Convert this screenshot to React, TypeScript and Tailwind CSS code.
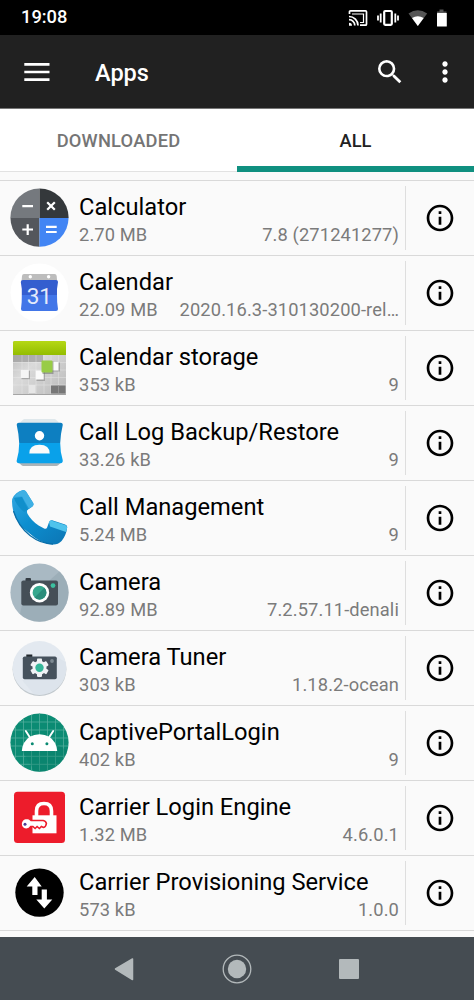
import React, { useState } from 'react';
import { MdInfoOutline, MdSearch, MdMoreVert } from 'react-icons/md';

type Tab = 'downloaded' | 'all';

interface AppInfo {
  name: string;
  size: string;
  version: string;
  icon: React.ReactNode;
}

function AppIcon({ children }: { children: React.ReactNode }) {
  return (
    <svg viewBox="0 0 60 60" className="w-[60px] h-[60px] shrink-0">
      {children}
    </svg>
  );
}

const CalculatorIcon = () => (
  <AppIcon>
    <clipPath id="calc-clip">
      <circle cx="29.5" cy="29.6" r="29.1" />
    </clipPath>
    <g clipPath="url(#calc-clip)">
      <rect width="29.5" height="30" fill="#75797e" />
      <rect x="29.5" width="30" height="30" fill="#34383b" />
      <rect y="30" width="29.5" height="30" fill="#54575c" />
      <rect x="29.5" y="30" width="30" height="30" fill="#4285f4" />
    </g>
    <g stroke="#fff" strokeWidth="2.2" fill="none">
      <path d="M12.3 18.2h10.7M12.3 41.5h10.7M17.7 36.2v10.7M36 38.8h10.7M36 44h10.7" />
      <path d="M37.2 14.2l7.6 7.6M44.8 14.2l-7.6 7.6" />
    </g>
  </AppIcon>
);

const CalendarIcon = () => (
  <AppIcon>
    <circle cx="29.5" cy="29.6" r="29" fill="#fff" />
    <path d="M14 11h30.5q2 0 2.200 2l.4 5h-35.500l.4-5q.2-2 2-2z" fill="#bdbdbd" />
    <circle cx="20.3" cy="13.8" r="1.7" fill="#fff" />
    <circle cx="38.6" cy="13.8" r="1.7" fill="#fff" />
    <path d="M13 17h33q2 0 2 2-1.5 7.5-1 13H11.8q.5-5.5-1-13 0-2 2.2-2z" fill="#345ecf" />
    <path d="M11.8 32H47q-.2 6 1 14 0 2-2 2H13q-2 0-2-2 1-8 .8-14z" fill="#4276e8" />
    <text x="29.3" y="40.500" fontSize="22.500" fontFamily="Roboto, sans-serif" textAnchor="middle" fill="#e4ebfb">31</text>
  </AppIcon>
);

const CalendarStorageIcon = () => (
  <AppIcon>
    <defs>
      <linearGradient id="cs-top" x1="0" y1="0" x2="0" y2="1">
        <stop offset="0" stopColor="#b5d815" />
        <stop offset="1" stopColor="#93bd00" />
      </linearGradient>
      <linearGradient id="cs-body" x1="0" y1="0" x2="1" y2="1">
        <stop offset="0" stopColor="#b4b4b4" />
        <stop offset=".4" stopColor="#dadada" />
        <stop offset="1" stopColor="#bababa" />
      </linearGradient>
    </defs>
    <rect x="3" y="3" width="53" height="54" rx="1.5" fill="url(#cs-body)" />
    <path d="M3 17V4.5Q3 3 4.5 3h50Q56 3 56 4.5V17z" fill="url(#cs-top)" />
    <rect x="3" y="17" width="30" height="7" fill="#9c9c9c" opacity=".7" />
    <path d="M12 17v39M18.5 17v39M26 17v39M34 17v39M41 17v39M48.5 17v39M3 24.5h53M3 32h53M3 39.5h53M3 47h53" stroke="#f1f1f1" strokeWidth=".5" opacity=".7" />
    <rect x="11.5" y="32.7" width="8.5" height="8.5" fill="#777" opacity=".5" />
    <rect x="10.8" y="32" width="8" height="8" fill="#f5f5f5" />
    <rect x="26.5" y="33.5" width="8.5" height="9.5" fill="#777" opacity=".5" />
    <rect x="25.7" y="32.5" width="8" height="9" fill="#fafafa" />
    <rect x="42" y="24.5" width="8" height="9" fill="#777" opacity=".5" />
    <rect x="41" y="24" width="7.5" height="8.5" fill="#fafafa" />
    <rect x="32.5" y="23.5" width="11" height="12.5" fill="#666" opacity=".5" />
    <rect x="31.5" y="22.5" width="11" height="12" rx="1" fill="#98cc46" />
    <rect x="19" y="47" width="6.5" height="8" fill="#e6e6e6" />
    <rect x="41" y="47.5" width="14.5" height="8" fill="#777" />
    <path d="M48.5 47v9M3 56.500h53" stroke="#999" strokeWidth=".8" />
  </AppIcon>
);

const CallLogIcon = () => (
  <AppIcon>
    <path d="M10.500 9l3.500-3h31l3.500 3v3h-38z" fill="#dfe8ec" />
    <path d="M8.5 49.5l3 2.800q.6.700 1.800.700h33q1 0 1.800-.7l3-2.800z" fill="#a9b3b8" />
    <path d="M9 9.700h41.500q2.600 0 2.200 2.500-2.200 9-2.500 17.800h-41Q8.800 21 6.800 12.200 6.400 9.700 9 9.700z" fill="#0d7fc1" />
    <path d="M9.200 30h41q0 9 2.500 17 .5 3-2.200 3.300H9Q6 50 6.800 47q2.400-8 2.400-17z" fill="#09a1ea" />
    <circle cx="29.5" cy="22.7" r="4.7" fill="#fff" />
    <path d="M19.3 40.5q0-8.800 10.200-8.800t10.200 8.800z" fill="#fafafa" />
  </AppIcon>
);

const PhoneIcon = () => (
  <AppIcon>
    <defs>
      <linearGradient id="ph" x1="0" y1="0" x2=".8" y2="1">
        <stop offset="0" stopColor="#36a9e2" />
        <stop offset=".5" stopColor="#0d8fd0" />
        <stop offset="1" stopColor="#0c79b8" />
      </linearGradient>
    </defs>
    <path d="M2.200 11Q5 4 13.200 2q2 0 3 1.800L23.200 15q1 2-.8 3.500l-5 3.500q-1 1.300.2 4 4 7 11 11.500l5.500 3q2.300.8 3-1l2-5.500q1-2.200 3-1.800l13 4.300q2.600 1 2 3.500-1 7.500-5.500 13-4 4-9 3.500-12-.8-23-11Q7 36.500 3.500 24 1.500 16 2.200 11z" fill="url(#ph)" />
    <path d="M13.200 2q2 0 3 1.800L23.200 15q1 2-.8 3.500L19 20.800 12 8.500 4.500 8.800Q8 3.500 13.200 2z" fill="#3fb0e4" />
    <path d="M4 10l8-1 6 12.500-4 2.500Q6 17 4 10z" fill="#118fcb" />
    <path d="M39 34q1-1.800 3-1.300l13 4.300q2.600 1 2 3.500l-1 3.500-16-5.500z" fill="#4fc3ec" />
    <path d="M3.500 23Q8 38 20 47.500q11 8.500 23 8.500" fill="none" stroke="#0b6fa9" strokeWidth="1.300" />
  </AppIcon>
);

const CameraIcon = () => (
  <AppIcon>
    <clipPath id="cam-clip">
      <circle cx="29.5" cy="29.6" r="29.1" />
    </clipPath>
    <g clipPath="url(#cam-clip)">
      <rect width="60" height="60" fill="#a9b9c3" />
      <path d="M50 8l12-4v56H8l4-18z" fill="#94a6b1" opacity=".6" />
    </g>
    <rect x="15.5" y="15" width="5.5" height="5" rx="1" fill="#333b42" />
    <rect x="11.3" y="17.5" width="36.7" height="25" rx="2" fill="#454f57" />
    <circle cx="29.5" cy="29.7" r="9.7" fill="#fff" />
    <circle cx="29.5" cy="29.7" r="6.9" fill="#37a98f" />
    <path d="M24.6 34.6a6.9 6.9 0 0 0 9.8-9.8z" fill="#2b8d7b" />
    <circle cx="43" cy="22.6" r="2.4" fill="#3cc1a0" />
  </AppIcon>
);

const CameraTunerIcon = () => (
  <AppIcon>
    <circle cx="29.5" cy="31.2" r="26.9" fill="#c2c9ce" />
    <circle cx="29.5" cy="30" r="26.9" fill="#e3e9f0" />
    <path d="M12.5 42.5L24 56.300a27 27 0 0 0 31.500-32.300l-9-5z" fill="#d7dfe8" opacity=".5" />
    <rect x="16.3" y="16.5" width="6" height="5" fill="#20272c" />
    <rect x="12.8" y="18.5" width="34" height="22.8" rx="1.8" fill="#46525d" />
    <g fill="#f0f3f6">
      <circle cx="29.5" cy="29.7" r="7" />
      {[0, 60, 120, 180, 240, 300].map((a) => (
        <rect key={a} x="27" y="20.5" width="5" height="5" rx=".8" transform={`rotate(${a} 29.5 29.7)`} />
      ))}
    </g>
    <circle cx="29.5" cy="29.7" r="4.200" fill="#35b79a" />
    <circle cx="42" cy="23" r="1.900" fill="#7d8992" />
  </AppIcon>
);

const AndroidIcon = () => (
  <AppIcon>
    <clipPath id="and-clip">
      <circle cx="29.5" cy="29.6" r="29.1" />
    </clipPath>
    <g clipPath="url(#and-clip)">
      <rect width="60" height="60" fill="#0b8b73" />
      <path d="M5.5 0v60M13.5 0v60M21.5 0v60M29.5 0v60M37.5 0v60M45.5 0v60M53.5 0v60M0 9h60M0 17h60M0 25h60M0 33h60M0 43.300h60M0 51.300h60" stroke="#52ad9c" strokeWidth=".8" />
      <path d="M12 38l13 21h30l5-20-13-7z" fill="#087a66" opacity=".35" />
    </g>
    <path d="M15.8 18l4.200 6.500M43.200 18L39 24.500" stroke="#fff" strokeWidth="1.900" strokeLinecap="round" />
    <path d="M11.8 38q.8-9.5 8-14.200Q24 21.300 29.500 21.300t9.700 2.500q7.200 4.700 8 14.200z" fill="#fff" />
    <circle cx="22.3" cy="30.8" r="1.500" fill="#0b8b73" />
    <circle cx="36.9" cy="30.8" r="1.500" fill="#0b8b73" />
  </AppIcon>
);

const CarrierLoginIcon = () => (
  <AppIcon>
    <rect x="4" y="3.700" width="51" height="51.300" rx="3.500" fill="#ed1c2b" />
    <path d="M26.500 28v-5q0-7.500 7.500-7.500t7.500 7.500v5" fill="none" stroke="#fff" strokeWidth="3.600" />
    <rect x="22.5" y="27.300" width="24" height="18" fill="#fff" />
    <path d="M11 36q.5-5.500 5.500-5.800 3 0 4.700 2.300h12q2.700.5 3.200 3-.5 3.500-3 4l-2-1-2 2-2.300-2-2 2-2.200-2h-2q-1.500 2.700-4.400 2.700-5-.2-5.500-5.200z" fill="#fff" stroke="#ed1c2b" strokeWidth="1.600" />
    <circle cx="15" cy="36.300" r="1.500" fill="#4b3b94" />
  </AppIcon>
);

const ProvisioningIcon = () => (
  <AppIcon>
    <circle cx="29.5" cy="29.6" r="24.200" fill="#000" />
    <path d="M24.700 14l7 9.500h-4.200V32h-5.200v-8.500h-5.600z" fill="#fff" />
    <path d="M34.300 45.500l-8-9h5.400v-10h5.200v10h5.400z" fill="#fff" />
  </AppIcon>
);

const apps: AppInfo[] = [
  { name: 'Calculator', size: '2.70 MB', version: '7.8 (271241277)', icon: <CalculatorIcon /> },
  { name: 'Calendar', size: '22.09 MB', version: '2020.16.3-310130200-rel…', icon: <CalendarIcon /> },
  { name: 'Calendar storage', size: '353 kB', version: '9', icon: <CalendarStorageIcon /> },
  { name: 'Call Log Backup/Restore', size: '33.26 kB', version: '9', icon: <CallLogIcon /> },
  { name: 'Call Management', size: '5.24 MB', version: '9', icon: <PhoneIcon /> },
  { name: 'Camera', size: '92.89 MB', version: '7.2.57.11-denali', icon: <CameraIcon /> },
  { name: 'Camera Tuner', size: '303 kB', version: '1.18.2-ocean', icon: <CameraTunerIcon /> },
  { name: 'CaptivePortalLogin', size: '402 kB', version: '9', icon: <AndroidIcon /> },
  { name: 'Carrier Login Engine', size: '1.32 MB', version: '4.6.0.1', icon: <CarrierLoginIcon /> },
  { name: 'Carrier Provisioning Service', size: '573 kB', version: '1.0.0', icon: <ProvisioningIcon /> },
];

function StatusBar() {
  return (
    <div className="h-[35px] shrink-0 bg-black flex items-center justify-between pl-[21px] pr-[26px]">
      <span className="text-[18.3px] leading-none font-medium">19:08</span>
      <svg viewBox="0 0 100 18" className="w-[100px] h-[18px]" fill="none">
        {/* Cast */}
        <path d="M1.5 5V2.800q0-1 1-1h15q1 0 1 1v12.400q0 1-1 1H12" stroke="#fff" strokeWidth="1.700" />
        <path d="M4 5h11.500v8.500H12" stroke="#fff" strokeWidth="1.200" />
        <path d="M1 7.500a9 9 0 0 1 9 9M1 10.700a5.800 5.800 0 0 1 5.800 5.800" stroke="#fff" strokeWidth="1.700" />
        <path d="M1 13.700a3 3 0 0 1 3 3H1z" fill="#fff" />
        {/* Vibrate */}
        <rect x="36.200" y="2" width="7.600" height="13.800" rx="1" stroke="#fff" strokeWidth="2.200" />
        <path d="M32.700 4.500v9M47.300 4.500v9" stroke="#fff" strokeWidth="1.800" />
        <path d="M30 6.500v5M50 6.500v5" stroke="#fff" strokeWidth="1.800" />
        {/* Wifi */}
        <path d="M60.5 4.500q9.300-6.500 18.700 0L69.800 17z" fill="#555" />
        <path d="M64 9q5.800-3.600 11.700 0l-5.900 8z" fill="#fff" />
        {/* Battery */}
        <path d="M91.500 .5h4v2h3V5H89V2.500h2.500z" fill="#555" />
        <rect x="89" y="4" width="9.800" height="13.500" rx=".5" fill="#fff" />
      </svg>
    </div>
  );
}

function AppRow({ app }: { app: AppInfo }) {
  return (
    <li className="h-[75px] border-t border-[#d9d9d9] flex items-center pl-[10px]">
      {app.icon}
      <div className="w-[320px] ml-[9px] pt-[5px] flex flex-col">
        <span className="text-[23.7px] leading-[29px] text-black whitespace-nowrap">{app.name}</span>
        <div className="flex justify-between text-[18.3px] leading-[26px] tracking-[0.12px] text-[#7b7b7b] whitespace-nowrap">
          <span>{app.size}</span>
          <span>{app.version}</span>
        </div>
      </div>
      <div className="ml-[6px] h-[64px] w-px bg-[#dedede]" />
      <button className="ml-[18px] text-black">
        <MdInfoOutline className="w-8 h-8" />
      </button>
    </li>
  );
}

function App() {
  const [tab, setTab] = useState<Tab>('all');

  const tabClass = (name: Tab) => (tab === name ? 'text-[#212121]' : 'text-[#757575]');
  const barClass = (name: Tab) => (tab === name ? 'h-[6px] bg-[#109080]' : 'h-px bg-[#e2e2e2]');

  return (
    <div className="w-full h-screen flex flex-col overflow-hidden bg-[#fafafa] font-['Roboto',sans-serif] text-white">
      <StatusBar />

      {/* Toolbar */}
      <header className="h-[73px] shrink-0 bg-[#212121] flex items-center pl-[24px] pr-[13px]">
        <svg viewBox="0 0 26 18" className="w-[26px] h-[18px]">
          <path d="M.3 1.400h25.200M.3 9h25.200M.3 16.600h25.200" stroke="#fff" strokeWidth="2.600" />
        </svg>
        <h1 className="ml-[45px] pt-[4px] text-[23.5px] font-medium leading-none">Apps</h1>
        <MdSearch className="ml-auto w-[32px] h-[32px]" />
        <MdMoreVert className="ml-[23px] w-[32px] h-[32px]" />
      </header>

      {/* Tabs */}
      <div className="h-[64px] shrink-0 bg-white border-t border-[#777] flex text-[18.3px] font-medium">
        <button onClick={() => setTab('downloaded')} className={`flex-1 flex flex-col ${tabClass('downloaded')}`}>
          <span className="w-full h-[63px] leading-[64px] tracking-[0.2px] -mb-[1px]">DOWNLOADED</span>
          <span className={`w-full mt-auto ${barClass('downloaded')}`} />
        </button>
        <button onClick={() => setTab('all')} className={`flex-1 flex flex-col ${tabClass('all')}`}>
          <span className="w-full h-[57px] leading-[64px]">ALL</span>
          <span className={`w-full mt-auto ${barClass('all')}`} />
        </button>
      </div>

      <ul className="mt-[8px] h-[757px] shrink-0 overflow-hidden">
        {apps.map((app) => (
          <AppRow key={app.name} app={app} />
        ))}
        <li className="border-t border-[#d9d9d9]" />
      </ul>

      {/* Navigation bar */}
      <nav className="flex-1 bg-[#454c52] flex items-center justify-center">
        <svg viewBox="0 0 246 30" className="w-[246px] h-[30px]">
          <path d="M1.500 15L18.500 5v20.500z" fill="#b3b9bb" stroke="#b3b9bb" strokeWidth="1.500" strokeLinejoin="round" />
          <circle cx="123" cy="15" r="13.800" fill="none" stroke="#b3b9bb" strokeWidth="1.300" />
          <circle cx="123" cy="15" r="9.200" fill="#b3b9bb" />
          <rect x="225" y="5" width="20" height="20" rx="1" fill="#b3b9bb" />
        </svg>
      </nav>
    </div>
  );
}

export default App;
